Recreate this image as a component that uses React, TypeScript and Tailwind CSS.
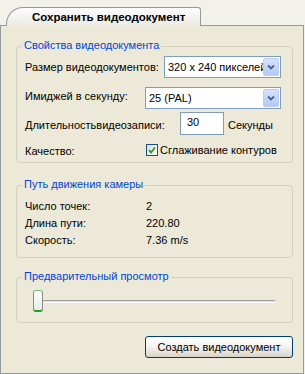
import React from 'react'

function Combo({ value, width }: { value: string; width: string }) {
  return (
    <div className={`${width} h-[22px] bg-white border border-[#7f9db9] flex items-center`}>
      <span className="flex-1 pl-[3px] whitespace-nowrap overflow-hidden">{value}</span>
      <div className="w-[16px] h-[18px] mr-[1px] rounded-[2px] bg-gradient-to-b from-[#d6e2fd] to-[#b3c9f7] border border-[#b9cbf3] flex items-center justify-center">
        <svg width="8" height="6" viewBox="0 0 8 6">
          <path d="M1 1.5 L4 4.5 L7 1.5" stroke="#4d6185" strokeWidth="1.8" fill="none" />
        </svg>
      </div>
    </div>
  )
}

function Group({ title, children, className }: { title: string; children: React.ReactNode; className: string }) {
  return (
    <div className={`ml-[15px] w-[277px] border border-[#d0d0bf] rounded-[4px] ${className}`}>
      <div className="-mt-[8px] ml-[5px] px-[2px] w-fit h-[13px] bg-[#ece9d8] leading-[13px] text-[#0046d5]">
        {title}
      </div>
      {children}
    </div>
  )
}

export default function App() {
  return (
    <div className="w-[305px] h-[374px] bg-[#f3f2ea] text-[11px] leading-[14px] text-black font-['Liberation_Sans',sans-serif]">
      {/* tab strip */}
      <div className="h-[25px] flex items-end pl-[6px]">
        <div className="relative z-10 -mb-px w-[195px] h-[19px] border border-b-0 border-[#919b9c] rounded-tl-[17px] rounded-tr-[3px] bg-gradient-to-b from-[#fcfcfe] to-[#ecebe3] flex items-center pl-[25px] font-bold text-[11.5px]">
          Сохранить видеодокумент
        </div>
      </div>

      {/* tab page */}
      <div className="w-[304px] h-[349px] border border-[#919b9c] bg-[#ece9d8] pt-[20px]">
        <Group title="Свойства видеодокумента" className="pb-[4px]">
          <div className="pl-[8px] mt-[4px] flex items-center h-[22px]">
            <span className="w-[139px]">Размер видеодокументов:</span>
            <Combo value="320 x 240 пикселей" width="w-[117px]" />
          </div>
          <div className="pl-[8px] mt-[9px] flex items-center h-[22px]">
            <span className="w-[120px] -mt-[4px]">Имиджей в секунду:</span>
            <Combo value="25 (PAL)" width="w-[136px]" />
          </div>
          <div className="pl-[8px] mt-[3px] flex items-center h-[23px]">
            <span className="w-[155px] mt-[3px]">Длительностьвидеозаписи:</span>
            <div className="w-[44px] h-[23px] bg-white border border-[#7f9db9] pl-[6px] pt-[2px] leading-[14px]">30</div>
            <span className="ml-[4px] mt-[2px]">Секунды</span>
          </div>
          <div className="pl-[8px] mt-[7px] flex items-center h-[16px]">
            <span className="w-[121px] mt-[2px]">Качество:</span>
            <div className="w-[12px] h-[12px] border border-[#1c5180] bg-gradient-to-br from-[#dcdcd7] to-white flex items-center justify-center">
              <svg width="8" height="8" viewBox="0 0 8 8">
                <path d="M1 4 L3 6.5 L7 1.5" stroke="#21a121" strokeWidth="1.8" fill="none" />
              </svg>
            </div>
            <span className="ml-[2px]">Сглаживание контуров</span>
          </div>
        </Group>

        <Group title="Путь движения камеры" className="mt-[22px] pb-[9px]">
          <div className="pl-[8px] mt-[6px] flex flex-col">
            {[
              ['Число точек:', '2'],
              ['Длина пути:', '220.80'],
              ['Скорость:', '7.36 m/s'],
            ].map(([k, v]) => (
              <div key={k} className="flex items-center h-[17px]">
                <span className="w-[121px]">{k}</span>
                <span>{v}</span>
              </div>
            ))}
          </div>
        </Group>

        <Group title="Предварительный просмотр" className="mt-[19px] pb-[10px]">
          <div className="mt-[7px] ml-[16px] flex items-center h-[22px]">
            <div className="w-[10px] h-[22px] rounded-[3px] border border-[#8c8c8c] border-b-[2px] border-b-[#21a121] border-t-[#6fbf6f] bg-gradient-to-b from-white to-[#e8e8e4]" />
            <div className="w-[232px] h-[3px] border-t border-t-[#9d9c99] border-b border-b-white bg-[#e1dfd5]" />
          </div>
        </Group>

        <div className="mt-[13px] ml-[144px] w-[148px] h-[22px] rounded-[3px] border border-[#003c74] bg-gradient-to-b from-white via-[#f4f3ee] to-[#d8d4c8] flex items-center justify-center">
          Создать видеодокумент
        </div>
      </div>
    </div>
  )
}
